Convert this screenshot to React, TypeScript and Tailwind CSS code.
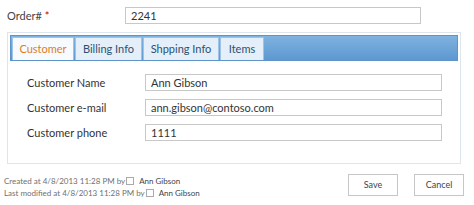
import React from "react";

const tabs = [
  { name: "Customer", w: "w-[62px]" },
  { name: "Billing Info", w: "w-[67px]" },
  { name: "Shpping Info", w: "w-[76px]" },
  { name: "Items", w: "w-[44px]" },
];

const fields = [
  { label: "Customer Name", value: "Ann Gibson" },
  { label: "Customer e-mail", value: "ann.gibson@contoso.com" },
  { label: "Customer phone", value: "1111" },
];

function Box({ value, className }: { value: string; className: string }) {
  return (
    <div
      className={`h-[17px] border border-[#c8c8c8] bg-white pl-[5px] text-[11px] leading-[15px] text-[#333] ${className}`}
    >
      {value}
    </div>
  );
}

function Person() {
  return (
    <span className="inline-flex items-center">
      <span className="mx-[1px] inline-block h-[8px] w-[8px] border border-[#aaa] bg-white" />
      <span className="ml-[4px] text-[#444]">Ann Gibson</span>
    </span>
  );
}

export default function App() {
  return (
    <div
      className="h-[205px] w-[474px] bg-white text-[#444]"
      style={{ fontFamily: 'Lato, "Liberation Sans", sans-serif' }}
    >
      <div className="flex items-center pt-[7px]">
        <div className="w-[125px] pl-[7px] text-[11px] leading-[16px]">
          Order# <span className="text-[#c00]">*</span>
        </div>
        <Box value="2241" className="w-[296px]" />
      </div>

      <div className="ml-[7px] mt-[8px] h-[132px] w-[454px] border border-[#dde6ee] p-[2px]">
        <div className="flex h-[26px] items-end border border-[#5f94c8] bg-gradient-to-b from-[#7fb3e0] to-[#5c98d0] pl-[1px]">
          {tabs.map((t, i) => (
            <div
              key={t.name}
              className={`mr-[1px] flex h-[23px] items-center justify-center whitespace-nowrap border border-b-0 border-[#9fc3e6] text-[11px] ${t.w} ${
                i === 0
                  ? "bg-[#f8fbfe] text-[#e07b24]"
                  : "bg-[#e4eff9] text-[#2d4f73]"
              }`}
            >
              {t.name}
            </div>
          ))}
        </div>
        <div className="flex flex-col gap-[8px] pl-[17px] pt-[13px]">
          {fields.map((f) => (
            <div key={f.label} className="flex items-center">
              <div className="w-[118px] text-[11px] leading-[14px] text-[#333]">
                {f.label}
              </div>
              <Box value={f.value} className="w-[297px]" />
            </div>
          ))}
        </div>
      </div>

      <div className="flex items-start justify-between pl-[4px] pr-[10px] pt-[10px]">
        <div className="pt-[1px] text-[8px] leading-[12px] text-[#707070]">
          <div className="flex items-center">
            Created at 4/8/2013 11:28 PM by
            <Person />
          </div>
          <div className="flex items-center">
            Last modified at 4/8/2013 11:28 PM by
            <Person />
          </div>
        </div>
        <div className="flex gap-[16px]">
          <div className="flex h-[22px] w-[50px] items-center justify-center border border-[#c6c6c6] bg-white text-[9px] text-[#444]">
            Save
          </div>
          <div className="flex h-[22px] w-[50px] items-center justify-center border border-[#c6c6c6] bg-white text-[9px] text-[#444]">
            Cancel
          </div>
        </div>
      </div>
    </div>
  );
}
